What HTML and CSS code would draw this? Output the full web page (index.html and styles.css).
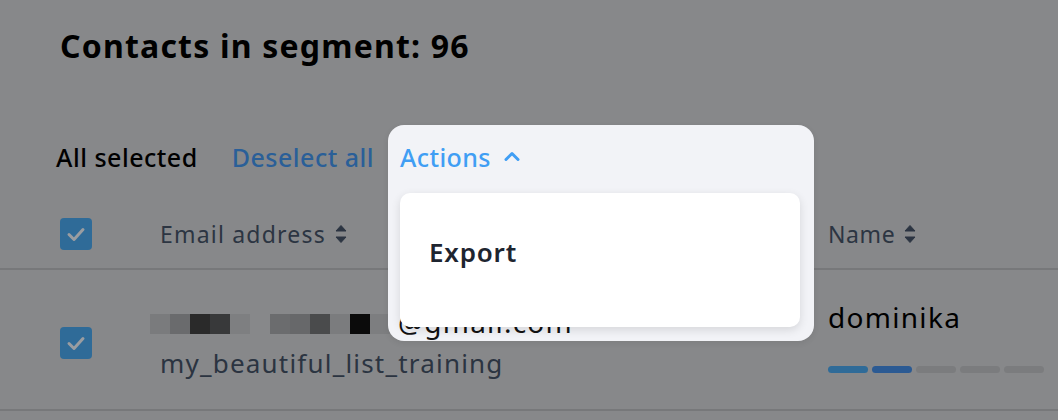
FILE: index.html
```html
<!DOCTYPE html>
<html>
<head>
<meta charset="utf-8">
<link rel="stylesheet" href="styles.css">
</head>
<body>
<div class="page">
  <h1 class="title">Contacts in segment: 96</h1>
  <div class="toolbar">
    <span class="all">All selected</span>
    <span class="deselect">Deselect all</span>
  </div>
  <div class="thead">
    <div class="c-check"><span class="cb"><svg viewBox="0 0 32 32" width="32" height="32"><path d="M9 16.5l5 5 9-10" fill="none" stroke="#9a9da1" stroke-width="3" stroke-linecap="round" stroke-linejoin="round"/></svg></span></div>
    <div class="c-email th th-email">Email address <svg class="sort" viewBox="0 0 12 20" width="12" height="20"><path d="M1 7L6 1.5 11 7Z M1 13L6 18.5 11 13Z" fill="#2c3542" stroke="#2c3542" stroke-width="1" stroke-linejoin="round"/></svg></div>
    <div class="c-name th">Name <svg class="sort" viewBox="0 0 12 20" width="12" height="20"><path d="M1 7L6 1.5 11 7Z M1 13L6 18.5 11 13Z" fill="#2c3542" stroke="#2c3542" stroke-width="1" stroke-linejoin="round"/></svg></div>
  </div>
  <div class="trow">
    <div class="c-check"><span class="cb"><svg viewBox="0 0 32 32" width="32" height="32"><path d="M9 16.5l5 5 9-10" fill="none" stroke="#9a9da1" stroke-width="3" stroke-linecap="round" stroke-linejoin="round"/></svg></span></div>
    <div class="c-email">
      <div class="email">
        <span class="px" style="background:#7a7b7d"></span><span class="px" style="background:#6a6b6d"></span><span class="px" style="background:#2a2a2a"></span><span class="px" style="background:#38393a"></span><span class="px" style="background:#7e7f81"></span><span class="px" style="background:#87888a"></span><span class="px" style="background:#6b6c6e"></span><span class="px" style="background:#67686a"></span><span class="px" style="background:#4a4b4c"></span><span class="px" style="background:#7b7c7e"></span><span class="px" style="background:#0b0b0b"></span><span class="px" style="background:#7d7e80"></span><span class="domain">@gmail.com</span>
      </div>
      <div class="list">my_beautiful_list_training</div>
    </div>
    <div class="c-name">
      <div class="name">dominika</div>
      <div class="bars"><span class="bar b1"></span><span class="bar b2"></span><span class="bar"></span><span class="bar"></span><span class="bar"></span></div>
    </div>
  </div>
  <div class="popover">
    <div class="trigger">Actions <svg viewBox="0 0 16 10" width="16" height="10"><path d="M2 8.5L8 2.5l6 6" fill="none" stroke="#409ef4" stroke-width="3" stroke-linecap="round" stroke-linejoin="round"/></svg></div>
    <div class="menu"><div class="item">Export</div></div>
  </div>
</div>
</body>
</html>
```
FILE: styles.css
```css
html, body { margin: 0; padding: 0; }
body {
  background: #87888a;
  font-family: "Noto Sans", "Open Sans", sans-serif;
  width: 1058px;
  height: 420px;
  overflow: hidden;
}
.page { position: relative; height: 420px; }
.title {
  margin: 0;
  padding: 26px 0 0 60px;
  font-size: 32px;
  font-weight: 700;
  letter-spacing: 1.2px;
  color: #000;
  line-height: 40px;
}
.toolbar {
  display: flex;
  gap: 34px;
  margin-top: 71px;
  padding-left: 56px;
  height: 40px;
  align-items: center;
  font-size: 25px;
  letter-spacing: 0.5px;
  font-weight: 500;
}
.all { color: #000; }
.deselect { color: #2a5f98; }
.thead, .trow { display: flex; }
.thead {
  margin-top: 23px;
  height: 70px;
  align-items: center;
  border-bottom: 2px solid #77787a;
  box-sizing: border-box;
}
.trow {
  height: 141px;
  border-bottom: 2px solid #77787a;
  box-sizing: border-box;
  align-items: flex-start;
}
.c-check { width: 160px; padding-left: 60px; box-sizing: border-box; display: flex; }
.c-email { width: 668px; }
.c-name { flex: 1; }
.th {
  font-size: 23px;
  color: #2c3542;
  letter-spacing: 0.6px;
  display: flex;
  align-items: center;
  gap: 9px;
}
.th-email { letter-spacing: 1.2px; }
.cb {
  width: 32px; height: 32px;
  background: #2f6b98;
  border-radius: 4px;
  display: block;
}
.cb svg { display: block; }
.trow .c-check { padding-top: 57px; }
.trow .c-email { padding-top: 44px; }
.trow .c-name { padding-top: 30px; }
.email {
  display: flex;
  align-items: flex-start;
  height: 20px;
  margin-left: -10px;
}
.px { width: 20px; height: 20px; display: block; flex: none; }
.domain {
  position: relative;
  z-index: 1;
  font-size: 28px;
  line-height: 20px;
  color: #111;
  margin-left: 8px;
  margin-top: -2px;
  letter-spacing: 1.2px;
}
.list {
  margin-top: 13px;
  font-size: 26px;
  line-height: 32px;
  color: #2b3441;
  letter-spacing: 1.2px;
}
.name {
  font-size: 28px;
  line-height: 34px;
  color: #000;
  letter-spacing: 1.3px;
}
.bars { display: flex; gap: 4px; margin-top: 32px; }
.bar { width: 40px; height: 7px; border-radius: 4px; background: #7b7c7e; }
.bar.b1 { background: #2f6b98; }
.bar.b2 { background: #2b5a93; }
.popover {
  position: absolute;
  left: 388px;
  top: 125px;
  width: 426px;
  height: 216px;
  background: #f2f3f7;
  border-radius: 16px;
  box-shadow: 0 2px 6px rgba(0,0,0,0.08);
  padding: 12px 14px 14px 12px;
  box-sizing: border-box;
}
.trigger {
  display: flex;
  align-items: center;
  gap: 13px;
  color: #409ef4;
  font-size: 25px;
  font-weight: 500;
  height: 40px;
  letter-spacing: 0.4px;
}
.trigger svg { margin-top: -2px; }
.menu {
  position: relative;
  z-index: 2;
  margin-top: 16px;
  height: 134px;
  background: #fff;
  border-radius: 10px;
  box-shadow: 0 3px 10px rgba(0,0,0,0.12);
  display: flex;
  align-items: center;
  padding-left: 29px;
}
.item {
  font-size: 26px;
  font-weight: 600;
  color: #1e2530;
  letter-spacing: 0.8px;
  margin-top: -16px;
}
```
